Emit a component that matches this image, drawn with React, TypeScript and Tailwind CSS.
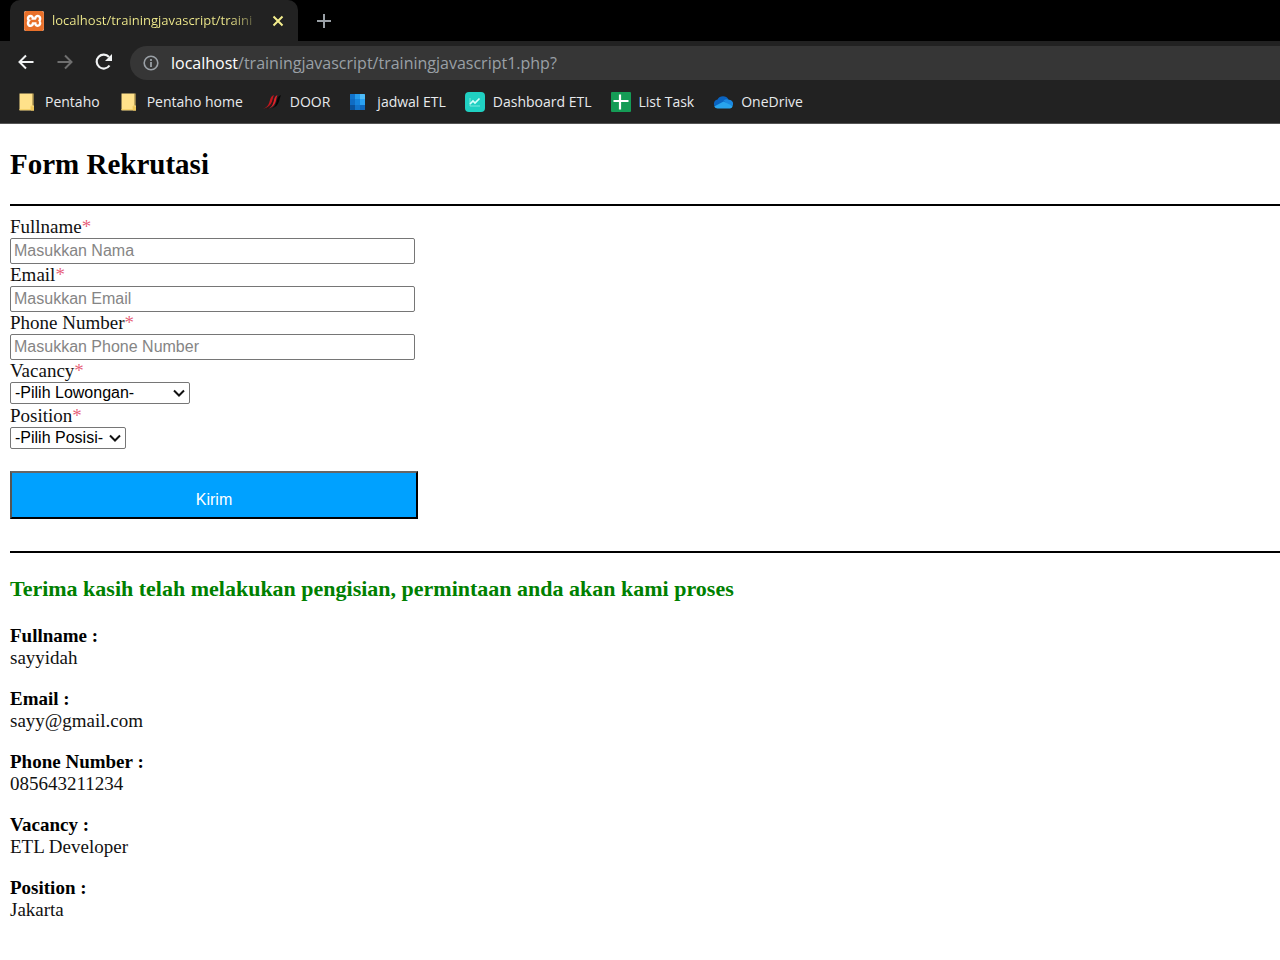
import React from "react";
import { SiXampp } from "react-icons/si";

function XamppIcon() {
  return (
    <span className="flex size-5 shrink-0 overflow-hidden rounded-xs bg-white text-[#e8702a]">
      <SiXampp className="size-5" aria-hidden="true" />
    </span>
  );
}

function FolderIcon() {
  return (
    <svg viewBox="0 0 20 20" className="size-5 shrink-0" aria-hidden="true">
      <path d="M2.5 1.5h13v12h1.5v5h-14.5z" fill="#ffe18a" />
      <path d="M2.5 17.5h11.5v-3.5h2v-12.5" fill="none" stroke="#f3cf68" strokeWidth="1" />
      <path d="M14 14.5h3v4h-3z" fill="#efc75a" />
    </svg>
  );
}

function DoorIcon() {
  return (
    <svg viewBox="0 0 20 20" className="size-5 shrink-0" aria-hidden="true">
      <path d="M8 17c5-1 6-5 7-9 .6-2.500 1.800-4.500 4-5-2 4-1 12-11 14z" fill="#060606" />
      <path d="M1 16.500c5-1 6-5 7-8.500.7-2.500 1.800-4.500 4-5-2 4-1 12-11 13.500z" fill="#c4161d" />
      <path d="M5 17c5-1 6-5 7-9 .6-2.500 1.600-4.500 3.500-5-2 4-.5 12-10.500 14z" fill="#e2222a" />
      <path d="M5 16.800c4.500-1.800 5.500-6 6.300-9.300" fill="none" stroke="#3a0c0e" strokeWidth=".7" />
    </svg>
  );
}

function GridIcon() {
  return (
    <svg viewBox="0 0 20 20" className="size-5 shrink-0" aria-hidden="true">
      <rect x="1" y="2" width="15" height="16" rx="1" fill="#1683dc" />
      <path d="M1 3a1 1 0 0 1 1-1h4v5H1z" fill="#1173cc" />
      <path d="M6 2h5v5H6z" fill="#259bec" />
      <path d="M11 2h4a1 1 0 0 1 1 1v4h-5z" fill="#4dbbf8" />
      <path d="M1 7h5v6H1z" fill="#0f6cc4" />
      <path d="M11 7h5v6h-5z" fill="#2aa2f3" />
      <path d="M1 13h5v5H2a1 1 0 0 1-1-1z" fill="#0a529c" />
      <path d="M6 13h5v5H6z" fill="#1273cb" />
      <path d="M11 13h5v4a1 1 0 0 1-1 1h-4z" fill="#1068bd" />
    </svg>
  );
}

function ChartIcon() {
  return (
    <svg viewBox="0 0 20 20" className="size-5 shrink-0" aria-hidden="true">
      <rect width="20" height="20" rx="4" fill="#20d0c2" />
      <path d="M5 6v8h10" fill="none" stroke="#7fe6dd" strokeWidth="1" />
      <path d="M5 12l3-3 2 2 4.500-4.500" fill="none" stroke="#d8fffb" strokeWidth="1.700" />
    </svg>
  );
}

function SheetIcon() {
  return (
    <svg viewBox="0 0 20 20" className="size-5 shrink-0" aria-hidden="true">
      <rect width="20" height="20" rx="1" fill="#159c56" />
      <path d="M9 2.500v15M2.500 9h15" stroke="#fff" strokeWidth="2.200" />
    </svg>
  );
}

function CloudIcon() {
  return (
    <svg viewBox="0 0 20 20" className="size-5 shrink-0" aria-hidden="true">
      <path d="M3.500 15.500A4.200 4.200 0 0 1 4.500 7.500 6.300 6.300 0 0 1 15.500 7.500L15 13z" fill="#0a63c0" />
      <path d="M10.500 8.500a5.500 5.500 0 0 1 5.500-.8 4.200 4.200 0 0 1 3.500 6.300l-5-1z" fill="#1a88e0" />
      <path d="M1.200 14.500L10.500 9.500l9.200 4.500a3 3 0 0 1-2.700 2.500H4.500a4 4 0 0 1-3.300-2z" fill="#28a4ee" />
    </svg>
  );
}

const bookmarks = [
  { name: "Pentaho", Icon: FolderIcon },
  { name: "Pentaho home", Icon: FolderIcon },
  { name: "DOOR", Icon: DoorIcon },
  { name: "jadwal ETL", Icon: GridIcon },
  { name: "Dashboard ETL", Icon: ChartIcon },
  { name: "List Task", Icon: SheetIcon },
  { name: "OneDrive", Icon: CloudIcon },
];

const textFields = [
  { id: "fullname", label: "Fullname", placeholder: "Masukkan Nama", type: "text" },
  { id: "email", label: "Email", placeholder: "Masukkan Email", type: "email" },
  { id: "phone", label: "Phone Number", placeholder: "Masukkan Phone Number", type: "tel" },
];

const results = [
  ["Fullname :", "sayyidah"],
  ["Email :", "sayy@gmail.com"],
  ["Phone Number :", "085643211234"],
  ["Vacancy :", "ETL Developer"],
  ["Position :", "Jakarta"],
];

function FieldLabel({ id, children }: { id: string; children: string }) {
  return (
    <label htmlFor={id} className="block leading-[22px]">
      {children}
      <span className="text-[#dc143c]/70">*</span>
    </label>
  );
}

function SelectField({ id, label, option, width }: { id: string; label: string; option: string; width: string }) {
  return (
    <div>
      <FieldLabel id={id}>{label}</FieldLabel>
      <div className={`relative mb-px ${width}`}>
        <select
          id={id}
          className="block h-[22px] w-full appearance-none rounded-xs border border-[#767676] bg-white pl-1 font-['Liberation_Sans',sans-serif] text-base leading-5 text-black"
        >
          <option>{option}</option>
        </select>
        <svg viewBox="0 0 12 8" className="pointer-events-none absolute top-[7px] right-[5px] h-2 w-3" aria-hidden="true">
          <path d="M1 1.500l5 5 5-5" fill="none" stroke="#111" strokeWidth="2" />
        </svg>
      </div>
    </div>
  );
}

function Browser() {
  return (
    <header className="border-b border-[#555] bg-[#222] font-['Open_Sans','Noto_Sans',sans-serif] text-sm text-[#e8eaed]">
      <div className="flex h-[41px] items-stretch bg-black">
        <div className="flex w-[298px] bg-[linear-gradient(to_right,black_50%,#222_50%)]">
          <div className="w-2.5 rounded-br-[10px] bg-black" />
          <div className="flex flex-1 items-center rounded-t-[10px] bg-[#222] pl-3.5 shadow-[0_-12px_0_12px_black] [clip-path:inset(0)]">
            <XamppIcon />
            <span className="ml-2 w-[210px] bg-linear-to-r from-[#f4ee8e] from-85% to-transparent bg-clip-text text-[13px] whitespace-nowrap text-transparent">
              localhost/trainingjavascript/traini
            </span>
            <button aria-label="Close tab" className="ml-2 flex size-4 shrink-0 items-center justify-center">
              <svg viewBox="0 0 12 12" className="size-3">
                <path d="M1.500 1.500l9 9M10.500 1.500l-9 9" stroke="#f4ee8e" strokeWidth="2" />
              </svg>
            </button>
          </div>
        </div>
        <button aria-label="New tab" className="ml-[18px] flex w-4 items-center justify-center">
          <svg viewBox="0 0 16 16" className="size-4">
            <path d="M8 1v14M1 8h14" stroke="#9aa0a6" strokeWidth="2" />
          </svg>
        </button>
      </div>
      <nav className="flex h-[42px] items-center pl-[18px]">
        <button aria-label="Back">
          <svg viewBox="0 0 16 16" className="size-4" fill="none" stroke="#f1f3f4" strokeWidth="2">
            <path d="M15.500 8H2M8 1.500L1.500 8 8 14.500" />
          </svg>
        </button>
        <button aria-label="Forward" className="ml-[23px]">
          <svg viewBox="0 0 16 16" className="size-4" fill="none" stroke="#6f6f6f" strokeWidth="2">
            <path d="M.5 8H14M8 1.500L14.500 8 8 14.500" />
          </svg>
        </button>
        <button aria-label="Reload" className="ml-[22px]">
          <svg viewBox="0 0 18 18" className="size-[18px]">
            <path d="M14.500 12.500A7 7 0 1 1 14 4" fill="none" stroke="#f1f3f4" strokeWidth="2.200" />
            <path d="M17 1v7h-7z" fill="#f1f3f4" />
          </svg>
        </button>
        <div className="mt-0.5 ml-[17px] flex h-[34px] flex-1 items-center rounded-l-full bg-[#363636] pl-[13px]">
          <svg viewBox="0 0 16 16" className="size-4 shrink-0" aria-hidden="true">
            <circle cx="8" cy="8" r="6.800" fill="none" stroke="#9aa0a6" strokeWidth="1.600" />
            <path d="M8 7v5M8 4v2" stroke="#9aa0a6" strokeWidth="1.800" />
          </svg>
          <span className="ml-3 text-base text-[#9aa0a6]">
            <span className="text-white">localhost</span>/trainingjavascript/trainingjavascript1.php?
          </span>
        </div>
      </nav>
      <ul className="flex h-10 items-center gap-[19px] pb-0.5 pl-[17px]">
        {bookmarks.map(({ name, Icon }) => (
          <li key={name}>
            <a href="#" className="flex items-center gap-2 whitespace-nowrap">
              <Icon />
              {name}
            </a>
          </li>
        ))}
      </ul>
    </header>
  );
}

export default function App() {
  return (
    <div className="min-h-screen bg-white">
      <Browser />
      <main className="pl-2.5 font-['Liberation_Serif',serif] text-[19px] leading-[22px] text-[#111]">
        <h1 className="pt-6 text-[29px] leading-8 font-bold text-black">Form Rekrutasi</h1>
        <hr className="mt-6 border-t-2 border-black" />
        <form className="pt-2.5" onSubmit={(e) => e.preventDefault()}>
          {textFields.map((f) => (
            <div key={f.id}>
              <FieldLabel id={f.id}>{f.label}</FieldLabel>
              <input
                id={f.id}
                type={f.type}
                placeholder={f.placeholder}
                className="block h-[26px] w-[405px] rounded-xs border border-[#767676] px-[3px] font-['Liberation_Sans',sans-serif] text-base placeholder:text-[#858585]"
              />
            </div>
          ))}
          <SelectField id="vacancy" label="Vacancy" option="-Pilih Lowongan-" width="w-[180px]" />
          <SelectField id="position" label="Position" option="-Pilih Posisi-" width="w-[116px]" />
          <button
            type="submit"
            className="mt-[22px] block h-12 w-[408px] border-2 border-t-[#666] border-r-black border-b-black border-l-[#555] bg-[#00a1ff] pt-2.5 font-['Liberation_Sans',sans-serif] text-base text-white"
          >
            Kirim
          </button>
        </form>
        <hr className="mt-8 border-t-2 border-black" />
        <h2 className="mt-6 text-[22px] leading-6 font-bold text-[#008000]">
          Terima kasih telah melakukan pengisian, permintaan anda akan kami proses
        </h2>
        <dl className="mt-6 grid gap-[19px]">
          {results.map(([term, value]) => (
            <div key={term}>
              <dt className="font-bold text-black">{term}</dt>
              <dd>{value}</dd>
            </div>
          ))}
        </dl>
      </main>
    </div>
  );
}
